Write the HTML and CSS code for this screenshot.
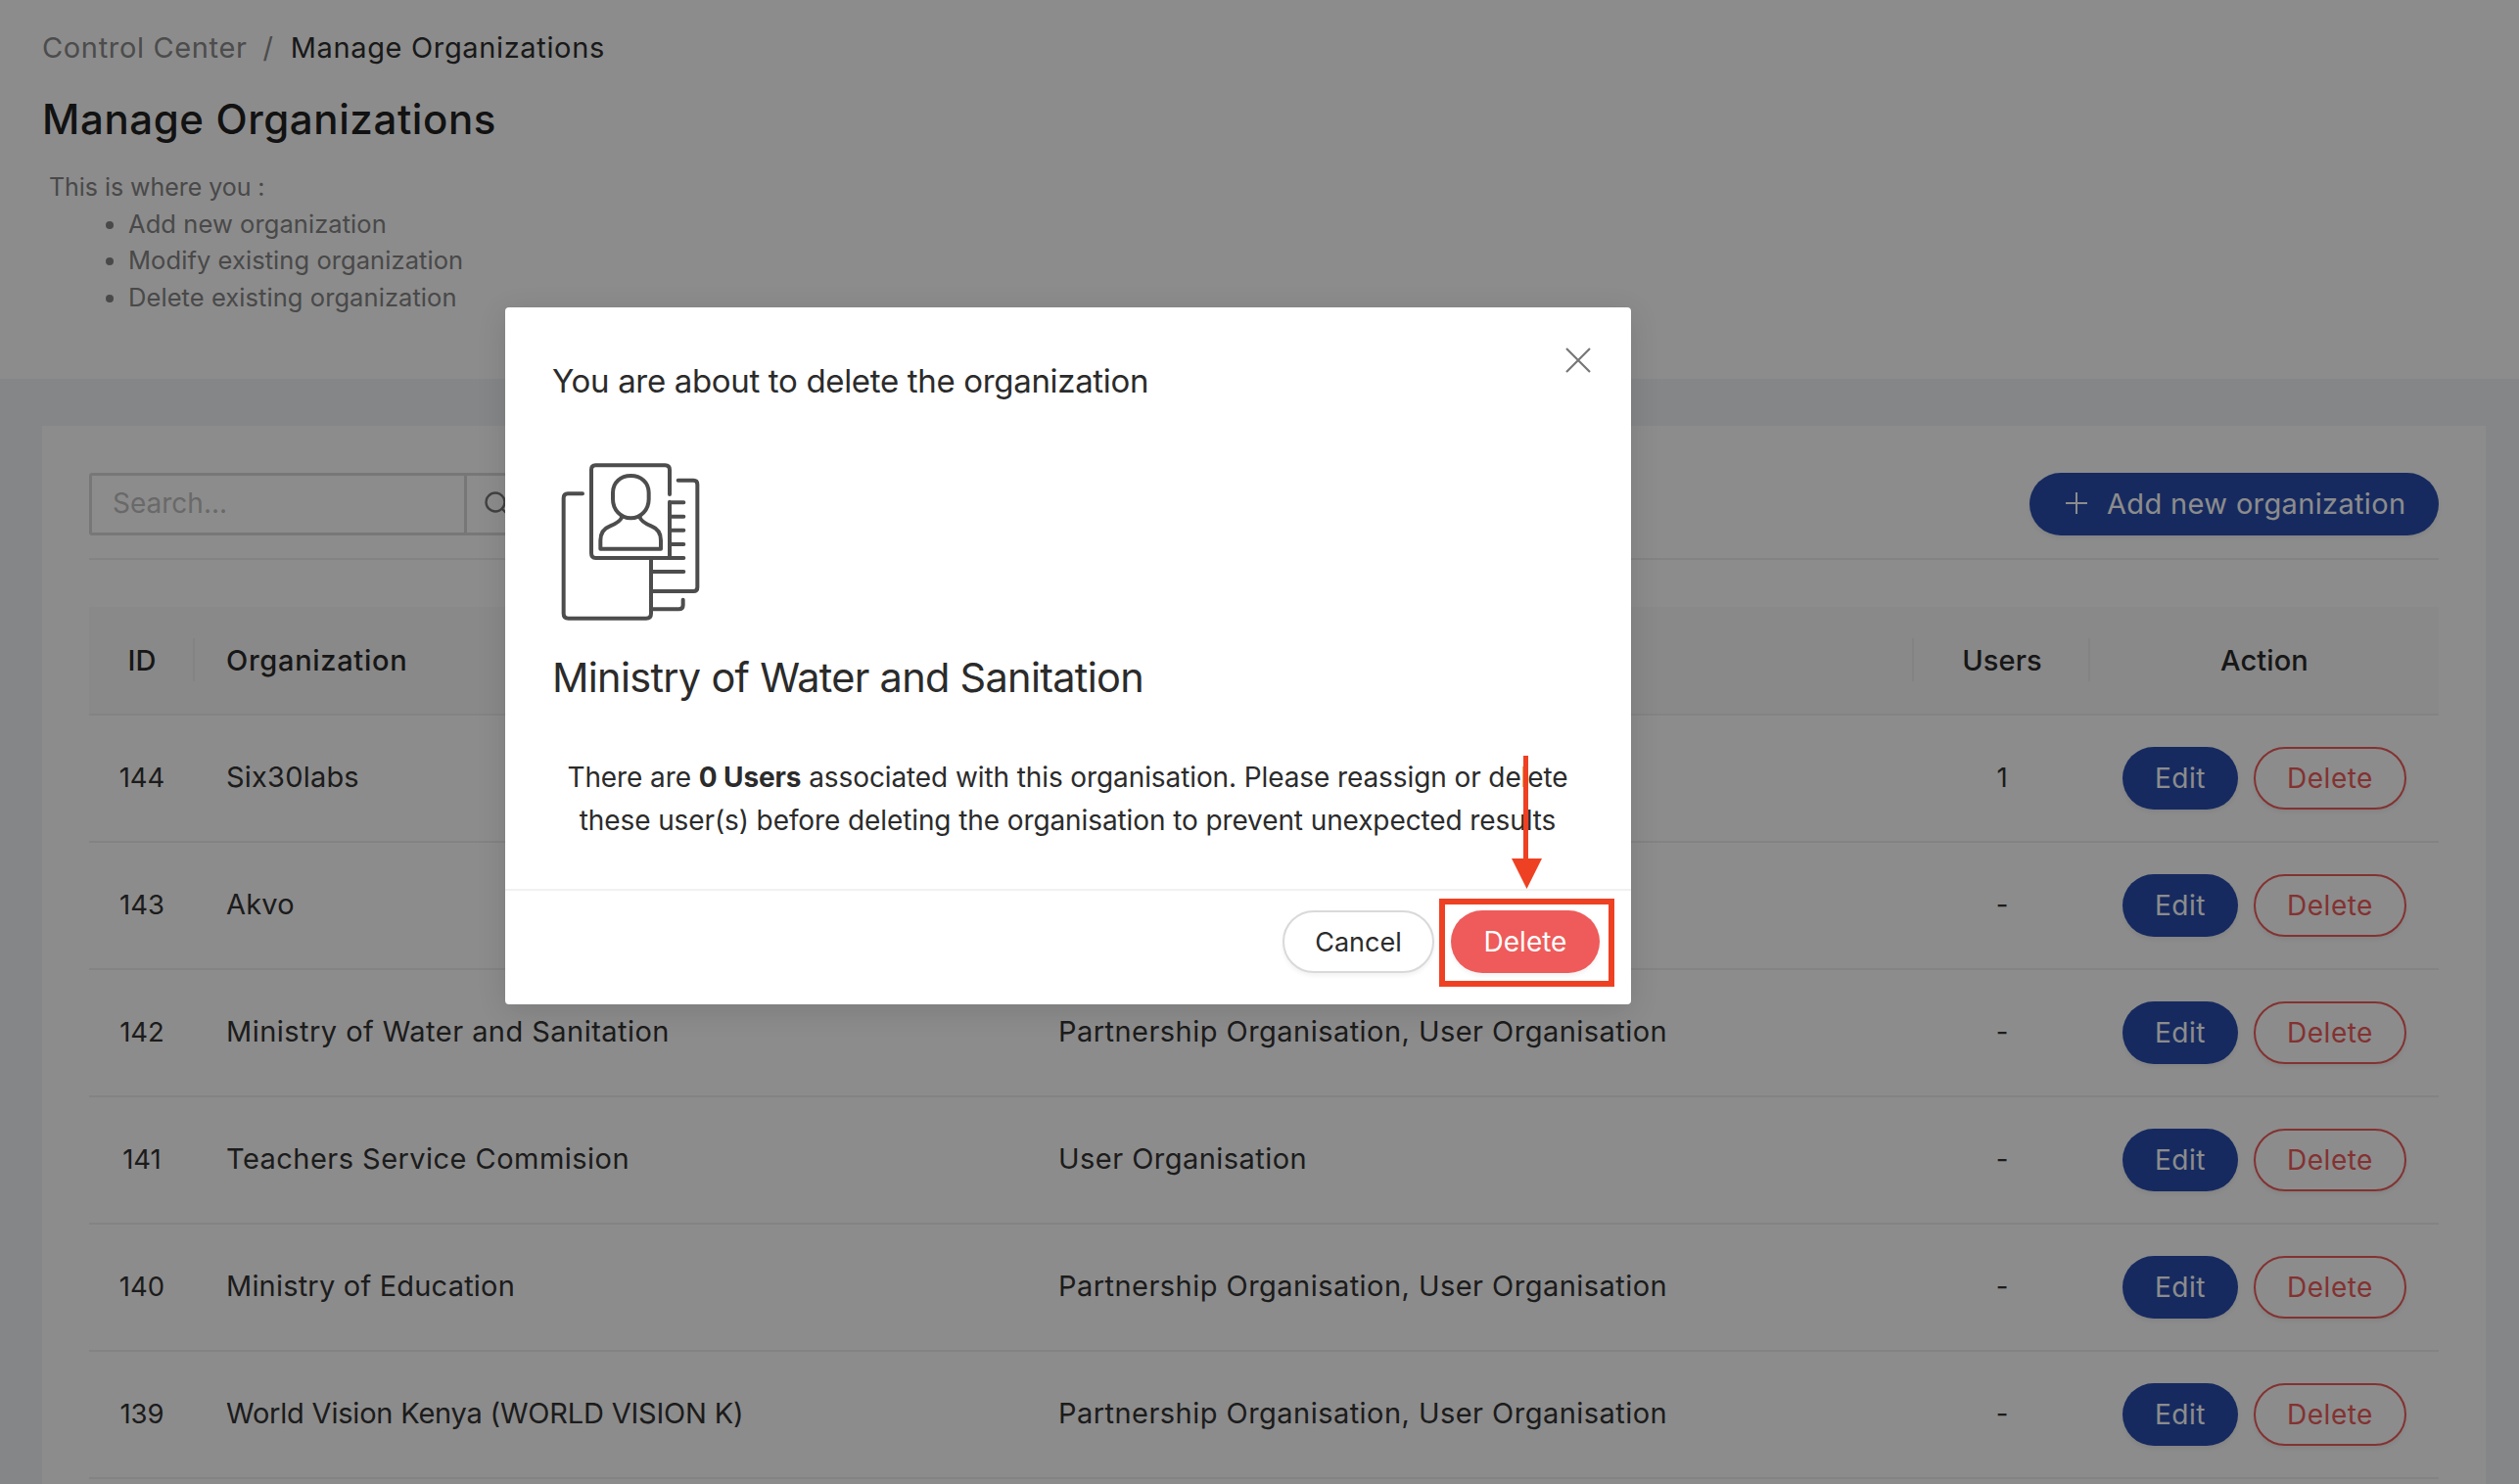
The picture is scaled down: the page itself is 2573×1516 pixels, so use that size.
FILE: index.html
```html
<!DOCTYPE html>
<html lang="en">
<head>
<meta charset="utf-8">
<title>Manage Organizations</title>
<link rel="stylesheet" href="styles.css">
</head>
<body>
<div class="page">
  <header class="head">
    <nav class="crumbs"><span class="crumb-muted">Control Center</span><span class="crumb-sep">/</span><span class="crumb-now">Manage Organizations</span></nav>
    <h1 class="title">Manage Organizations</h1>
    <p class="intro">This is where you :</p>
    <ul class="points">
      <li>Add new organization</li>
      <li>Modify existing organization</li>
      <li>Delete existing organization</li>
    </ul>
  </header>
  <main class="content">
    <section class="card">
      <div class="toolbar">
        <div class="search">
          <div class="search-input">Search...</div>
          <div class="search-btn">
            <svg class="search-icon" viewBox="0 0 28 28"><circle cx="12" cy="12" r="9.5"/><path d="M19 19l7 7"/></svg>
          </div>
        </div>
        <div class="add-btn"><svg class="plus" viewBox="0 0 24 24"><path d="M12 0v24M0 12h24"/></svg><span>Add new organization</span></div>
      </div>
      <table class="grid">
        <colgroup><col class="c-id"><col class="c-org"><col class="c-type"><col class="c-users"><col class="c-act"></colgroup>
        <thead>
          <tr><th class="mid sep">ID</th><th>Organization</th><th class="sep-r"></th><th class="mid sep">Users</th><th class="mid">Action</th></tr>
        </thead>
        <tbody>
          <tr><td class="mid">144</td><td class="short">Six30labs</td><td></td><td class="mid">1</td><td class="acts"><span class="edit">Edit</span><span class="del">Delete</span></td></tr>
          <tr><td class="mid">143</td><td class="short">Akvo</td><td></td><td class="mid">-</td><td class="acts"><span class="edit">Edit</span><span class="del">Delete</span></td></tr>
          <tr><td class="mid">142</td><td>Ministry of Water and Sanitation</td><td>Partnership Organisation, User Organisation</td><td class="mid">-</td><td class="acts"><span class="edit">Edit</span><span class="del">Delete</span></td></tr>
          <tr><td class="mid">141</td><td>Teachers Service Commision</td><td>User Organisation</td><td class="mid">-</td><td class="acts"><span class="edit">Edit</span><span class="del">Delete</span></td></tr>
          <tr><td class="mid">140</td><td class="short">Ministry of Education</td><td>Partnership Organisation, User Organisation</td><td class="mid">-</td><td class="acts"><span class="edit">Edit</span><span class="del">Delete</span></td></tr>
          <tr><td class="mid">139</td><td class="tight">World Vision Kenya (WORLD VISION K)</td><td>Partnership Organisation, User Organisation</td><td class="mid">-</td><td class="acts"><span class="edit">Edit</span><span class="del">Delete</span></td></tr>
        </tbody>
      </table>
    </section>
  </main>
</div>

<div class="overlay"></div>

<div class="modal">
  <svg class="close" viewBox="0 0 26 26"><path d="M1 1l24 24M25 1L1 25"/></svg>
  <div class="modal-body">
    <h2 class="modal-title">You are about to delete the organization</h2>
    <svg class="doc-icon" viewBox="0 0 540 540">
      <path d="M372 135V60Q372 46 358 46H145Q132 46 132 60V315Q132 330 145 330H415"/>
      <path d="M372 158V330M372 160H415M372 203H415M372 245H415M372 288H415M318 372H415"/>
      <path d="M398 92H445Q457 92 457 105V420Q457 432 445 432H318"/>
      <path d="M105 133H60Q47 133 47 147V500Q47 515 62 515H300Q315 515 315 500V330"/>
      <path d="M413 458V475Q413 487 400 487H318"/>
      <path d="M253 78C222 78 198 98 198 130V150C198 182 222 208 253 208C284 208 308 182 308 150V130C308 98 284 78 253 78Z"/>
      <path d="M226 204C222 218 200 228 188 233C170 240 160 256 160 276V302H345V276C345 256 335 240 317 233C305 228 284 218 280 204"/>
    </svg>
    <h3 class="modal-name">Ministry of Water and Sanitation</h3>
    <p class="modal-text">There are <b>0 Users</b> associated with this organisation. Please reassign or delete these user(s) before deleting the organisation to prevent unexpected results</p>
  </div>
  <div class="modal-foot">
    <span class="btn-cancel">Cancel</span>
    <span class="btn-delete">Delete</span>
  </div>
</div>

<div class="mark-box"></div>
<div class="mark-line"></div>
<div class="mark-head"></div>
</body>
</html>
```
FILE: styles.css
```css
* { box-sizing: border-box; }
html, body { margin: 0; height: 100%; overflow: hidden; }
body { font-family: Inter, "Noto Sans", sans-serif; color: #333; background: #f3f4f6; position: relative; }

.head { height: 387px; background: #fff; padding: 26px 43px 0; }
.crumbs { display: flex; align-items: center; height: 44px; font-size: 29px; letter-spacing: .65px; }
.crumb-muted { color: #8a8a8a; }
.crumb-sep { color: #8a8a8a; margin: 0 17px 0 16px; }
.crumb-now { color: #2e2e2e; }
.title { margin: 30px 0 0; font-size: 42px; line-height: 44px; font-weight: 500; color: #222; letter-spacing: .6px; }
.intro { margin: 28px 0 0 7px; font-size: 25px; line-height: 38px; letter-spacing: -.05px; color: #858585; }
.points { margin: 0; padding: 0 0 0 88px; font-size: 25.5px; line-height: 37.4px; letter-spacing: .07px; color: #858585; }

.content { padding: 48px 34px 0 43px; }
.card { background: #fff; height: 1200px; padding: 48px; }
.toolbar { display: flex; justify-content: space-between; align-items: flex-start; height: 89px; border-bottom: 2px solid #efefef; }
.search { display: flex; height: 64px; }
.search-input { width: 386px; height: 64px; border: 3px solid #d9d9d9; border-radius: 3px 0 0 3px; padding: 0 21px; font-size: 28px; line-height: 56px; color: #bfbfbf; }
.search-btn { width: 120px; height: 64px; border: 3px solid #d9d9d9; border-left: 0; display: flex; align-items: center; padding-left: 17px; }
.search-icon { width: 28px; height: 28px; fill: none; stroke: #777; stroke-width: 2.4; }
.add-btn { width: 418px; height: 64px; border-radius: 32px; background: #284eaf; color: #fff; font-size: 29px; letter-spacing: .35px; display: flex; align-items: center; padding: 0 0 2px 37px; gap: 20px; box-shadow: 0 3px 4px rgba(0,0,0,.06); }
.plus { width: 22px; height: 22px; fill: none; stroke: #fff; stroke-width: 2.2; }

.grid { width: 2400px; table-layout: fixed; border-collapse: collapse; margin-top: 48px; }
.c-id { width: 108px; } .c-org { width: 850px; } .c-type { width: 906px; } .c-users { width: 180px; } .c-act { width: 356px; }
.grid th { height: 110px; background: #fafafa; font-size: 29px; font-weight: 500; color: #2b2b2b; letter-spacing: .7px; text-align: left; padding: 0 0 0 32px; border-bottom: 2px solid #efefef; position: relative; }
.grid td { height: 130px; font-size: 29px; letter-spacing: .46px; color: #333; padding: 0 0 3px 32px; border-bottom: 2px solid #efefef; }
.grid td.short { letter-spacing: .2px; }
.grid td.tight { letter-spacing: -.2px; }
.grid th.mid { text-align: center; padding: 0; letter-spacing: .1px; }
.grid td.mid { text-align: center; padding: 0 0 3px; font-size: 27.5px; letter-spacing: 0; }
.sep::after, .sep-r::after { content: ""; position: absolute; right: 0; top: 32px; height: 44px; width: 2px; background: #efefef; }
.acts { white-space: nowrap; }
.grid td.acts { padding: 0 0 0 33px; letter-spacing: .5px; }
.edit, .del { display: inline-flex; align-items: center; justify-content: center; height: 64px; border-radius: 32px; font-size: 28px; vertical-align: middle; box-shadow: 0 3px 4px rgba(0,0,0,.06); padding-bottom: 1px; }
.edit { width: 118px; background: #284eaf; color: #fff; margin-right: 16px; }
.del { width: 156px; background: #fff; color: #ee5b5a; border: 2px solid #ee5b5a; }

.overlay { position: absolute; inset: 0; background: rgba(0,0,0,.45); }

.modal { position: absolute; left: 516px; top: 314px; width: 1150px; height: 712px; background: #fff; border-radius: 4px; box-shadow: 0 6px 30px rgba(0,0,0,.12); }
.close { position: absolute; left: 1083px; top: 41px; width: 26px; height: 26px; fill: none; stroke: #777; stroke-width: 2.2; }
.modal-body { height: 596px; padding: 54px 49px 0 48px; border-bottom: 2px solid #f1f1f1; }
.modal-title { margin: 0; font-size: 33px; line-height: 42px; font-weight: 400; letter-spacing: -.33px; color: #2b2b2b; }
.doc-icon { display: block; width: 180px; height: 180px; margin: 50px 0 0 -4px; fill: none; stroke: #4d4d4d; stroke-width: 12; stroke-linecap: round; stroke-linejoin: round; }
.modal-name { margin: 24px 0 0; font-size: 41.5px; line-height: 56px; font-weight: 400; letter-spacing: -.72px; color: #2b2b2b; }
.modal-text { margin: 52px 0 0; font-size: 28px; line-height: 44px; letter-spacing: -.1px; color: #2b2b2b; text-align: center; }
.modal-text b { font-weight: 700; }
.modal-foot { display: flex; justify-content: flex-end; padding: 20px 32px 0 0; gap: 17px; }
.btn-cancel, .btn-delete { display: flex; align-items: center; justify-content: center; height: 64px; border-radius: 32px; box-shadow: 0 3px 4px rgba(0,0,0,.05); }
.btn-cancel { width: 155px; border: 2px solid #d9d9d9; color: #2b2b2b; background: #fff; font-size: 27px; }
.btn-delete { width: 152px; background: #ee5b5a; color: #fff; font-size: 28px; }

.mark-box { position: absolute; left: 1470px; top: 918px; width: 179px; height: 90px; border: 6px solid #ee4123; }
.mark-line { position: absolute; left: 1556px; top: 772px; width: 5px; height: 106px; background: #ee4123; }
.mark-head { position: absolute; left: 1544px; top: 877px; width: 31px; height: 31px; background: #ee4123; clip-path: polygon(0 0, 100% 0, 50% 100%); }
```
